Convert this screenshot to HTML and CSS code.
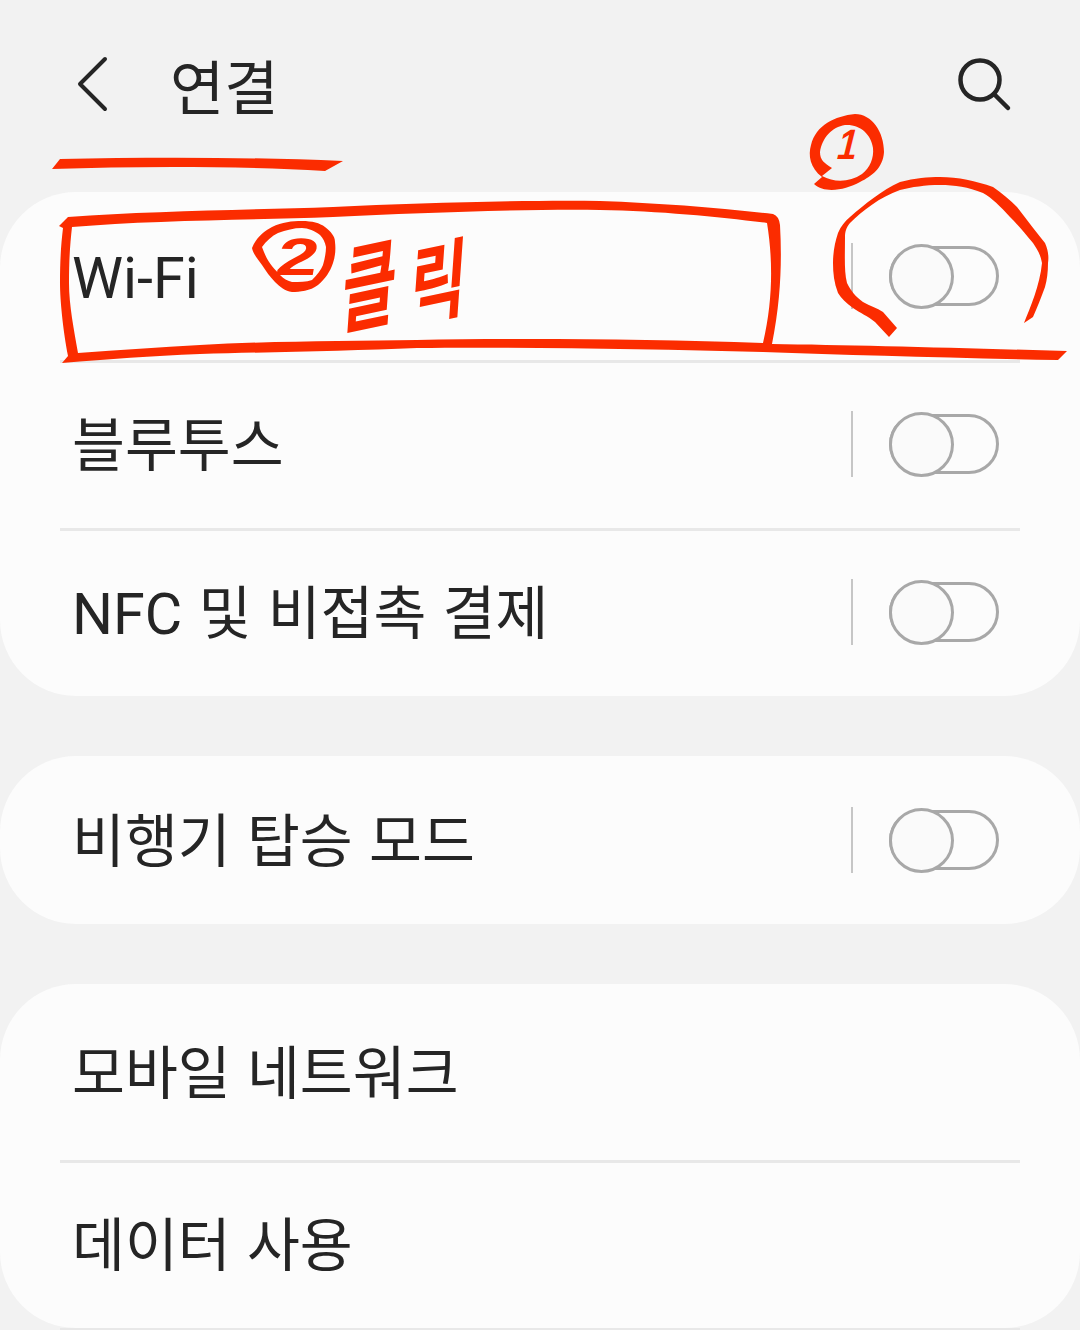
FILE: index.html
```html
<!DOCTYPE html>
<html lang="ko">
<head>
    <meta charset="UTF-8">
    <title>연결</title>
    <link rel="stylesheet" href="styles.css">
</head>
<body>
    <header class="top-bar">
        <svg class="back-icon" width="32" height="58" viewBox="0 0 32 58">
            <path d="M28 4 L3 29 L28 54" fill="none" stroke="#252525" stroke-width="4" stroke-linecap="round" stroke-linejoin="round"/>
        </svg>
        <h1 class="title">연결</h1>
        <svg class="search-icon" width="56" height="56" viewBox="0 0 56 56">
            <circle cx="24" cy="24" r="19.5" fill="none" stroke="#252525" stroke-width="4.5"/>
            <path d="M38 38 L52 52" fill="none" stroke="#252525" stroke-width="4.5" stroke-linecap="round"/>
        </svg>
    </header>

    <main>
        <section class="card">
            <div class="row">
                <span class="label">Wi-Fi</span>
                <span class="switch-sep"></span>
                <span class="switch"><span class="knob"></span></span>
            </div>
            <div class="row">
                <span class="label">블루투스</span>
                <span class="switch-sep"></span>
                <span class="switch"><span class="knob"></span></span>
            </div>
            <div class="row last">
                <span class="label">NFC 및 비접촉 결제</span>
                <span class="switch-sep"></span>
                <span class="switch"><span class="knob"></span></span>
            </div>
        </section>

        <section class="card">
            <div class="row last">
                <span class="label">비행기 탑승 모드</span>
                <span class="switch-sep"></span>
                <span class="switch"><span class="knob"></span></span>
            </div>
        </section>

        <section class="card">
            <div class="row tall">
                <span class="label">모바일 네트워크</span>
            </div>
            <div class="row">
                <span class="label">데이터 사용</span>
            </div>
        </section>
    </main>

    <!-- red pen marks drawn on top of the screenshot -->
    <svg class="pen" width="1080" height="1330" viewBox="0 0 1080 1330">
        <g class="pen-ink">
            <path d="M52 169 L60 159 C150 157 250 157 343 161 L325 171 C240 166 140 166 52 169 Z"/>
            <path fill-rule="evenodd" d="M59 226 L68 217 C150 211 250 210 333 207 C420 203 520 200 600 201 C660 203 720 208 773 214 Q779 216 780 225 C782 260 781 300 772 344 C850 345 960 348 1067 351 L1058 360 C950 358 850 355 763 352 C650 349 520 347 417 348 C350 351 270 352 200 354 C150 356 110 359 62 363 L68 356 C63 330 60 300 60 283 C60 260 61 245 63 228 Z M72 227 C150 220 250 220 333 217 C420 213 520 209 600 210 C660 211 720 217 767 223 C773 260 773 300 763 343 C650 339 520 338 417 340 C350 341 270 341 200 345 C160 347 120 350 78 353 C74 330 69 305 69 283 C69 260 70 245 72 227 Z"/>
            <path fill-rule="evenodd" d="M814 184 L822 177 C810 168 808 155 811 145 C816 125 835 116 855 114 C872 114 884 132 884 152 C883 168 872 176 860 182 C845 190 825 194 814 184 Z M822 176 C835 183 850 182 862 174 C870 168 874 158 873 148 C871 134 860 124 845 125 C832 127 822 138 820 152 C820 160 824 163 832 168 Z"/>
            <path fill-rule="evenodd" d="M252 248 C256 238 264 231 272 227 C282 222 292 221 302 221 C312 221 320 223 325 227 C331 232 335 236 335 242 C336 250 335 257 333 263 C330 272 325 279 318 285 C310 291 300 292 292 292 C285 291 280 287 275 282 C270 277 266 271 262 265 C258 259 253 254 252 248 Z M262 247 C268 264 274 268 280 275 C284 279 288 281 292 282 C300 282 306 282 312 280 C317 275 321 270 323 265 C325 258 326 252 326 247 C325 242 323 238 320 235 C315 231 308 228 302 228 C294 228 286 230 278 233 C272 236 266 241 262 247 Z"/>
            <path d="M1024 323 C1030 308 1040 285 1042 263 C1040 252 1036 248 1033 243 C1024 232 1017 224 1010 217 C1000 206 992 198 983 193 C968 187 955 185 940 185 C925 185 912 187 900 190 C880 197 862 211 850 223 C846 228 845 232 845 237 C845 255 844 272 847 283 C851 291 856 297 863 302 C870 306 877 308 883 312 L897 328 L889 337 L875 322 C868 316 860 313 853 308 C846 303 841 298 838 293 C834 283 833 273 833 263 C833 252 835 242 838 233 C841 226 845 221 850 217 C865 204 882 190 900 182 C915 178 928 177 940 177 C958 177 976 181 993 187 C1002 193 1010 200 1017 207 C1027 220 1036 232 1045 243 C1048 250 1049 256 1048 263 C1048 272 1047 280 1045 287 C1041 298 1037 308 1033 317 Z"/>
        </g>
        <text class="pen-num" transform="translate(835 159) skewX(-14) scale(0.7 0.85)">1</text>
        <text class="pen-num" transform="translate(274 275) skewX(-10) scale(1.5 1.05)">2</text>
        <text class="pen-word" transform="translate(340 327) rotate(-12) skewX(-16) scale(1 1.55)">클</text>
        <text class="pen-word" transform="translate(408 320) rotate(-12) skewX(-16) scale(1.05 1.4)">릭</text>
    </svg>
</body>
</html>
```

FILE: styles.css
```css
body {
    position: relative;
    width: 1080px;
    height: 1330px;
    margin: 0;
    overflow: hidden;
    background: #f2f2f2;
    color: #252525;
    font-family: 'Roboto', 'Noto Sans CJK KR', sans-serif;
}

.top-bar {
    display: flex;
    align-items: center;
    height: 168px;
    padding: 0 68px 0 77px;
    margin-bottom: 24px;
}

.back-icon {
    flex: none;
}

.title {
    margin: 0 0 0 61px;
    font-size: 59px;
    font-weight: 400;
    line-height: 1;
    flex: 1;
    font-family: 'Noto Sans CJK KR', sans-serif;
}

.search-icon {
    flex: none;
}

.card {
    background: #fcfcfc;
    border-radius: 76px;
    margin-bottom: 60px;
    padding: 0 60px;
}

.row {
    display: flex;
    align-items: center;
    height: 168px;
    padding: 0 21px 0 12px;
    box-shadow: 0 3px 0 #e8e8e8;
}

.row.last {
    box-shadow: none;
}

.row.tall {
    height: 176px;
}

.label {
    flex: 1;
    padding-top: 6px;
    font-size: 57.5px;
    line-height: 1;
    word-spacing: 2px;
}

.switch-sep {
    width: 2px;
    height: 66px;
    background: #c6c6c6;
    margin-right: 36px;
}

.switch {
    position: relative;
    box-sizing: border-box;
    width: 110px;
    height: 60px;
    border: 3px solid #a8a8a8;
    border-radius: 30px;
}

.knob {
    position: absolute;
    left: -3px;
    top: -5px;
    box-sizing: border-box;
    width: 65px;
    height: 65px;
    border: 3px solid #a8a8a8;
    border-radius: 50%;
    background: #fafafa;
}

.pen {
    position: absolute;
    left: 0;
    top: 0;
}

.pen-ink {
    fill: #fb2c00;
}

.pen-num {
    fill: #fb2c00;
    font-family: 'Liberation Sans', sans-serif;
    font-size: 50px;
    font-weight: 700;
}

.pen-word {
    fill: #fb2c00;
    font-family: 'Noto Sans CJK KR', sans-serif;
    font-size: 60px;
    font-weight: 700;
}
```
